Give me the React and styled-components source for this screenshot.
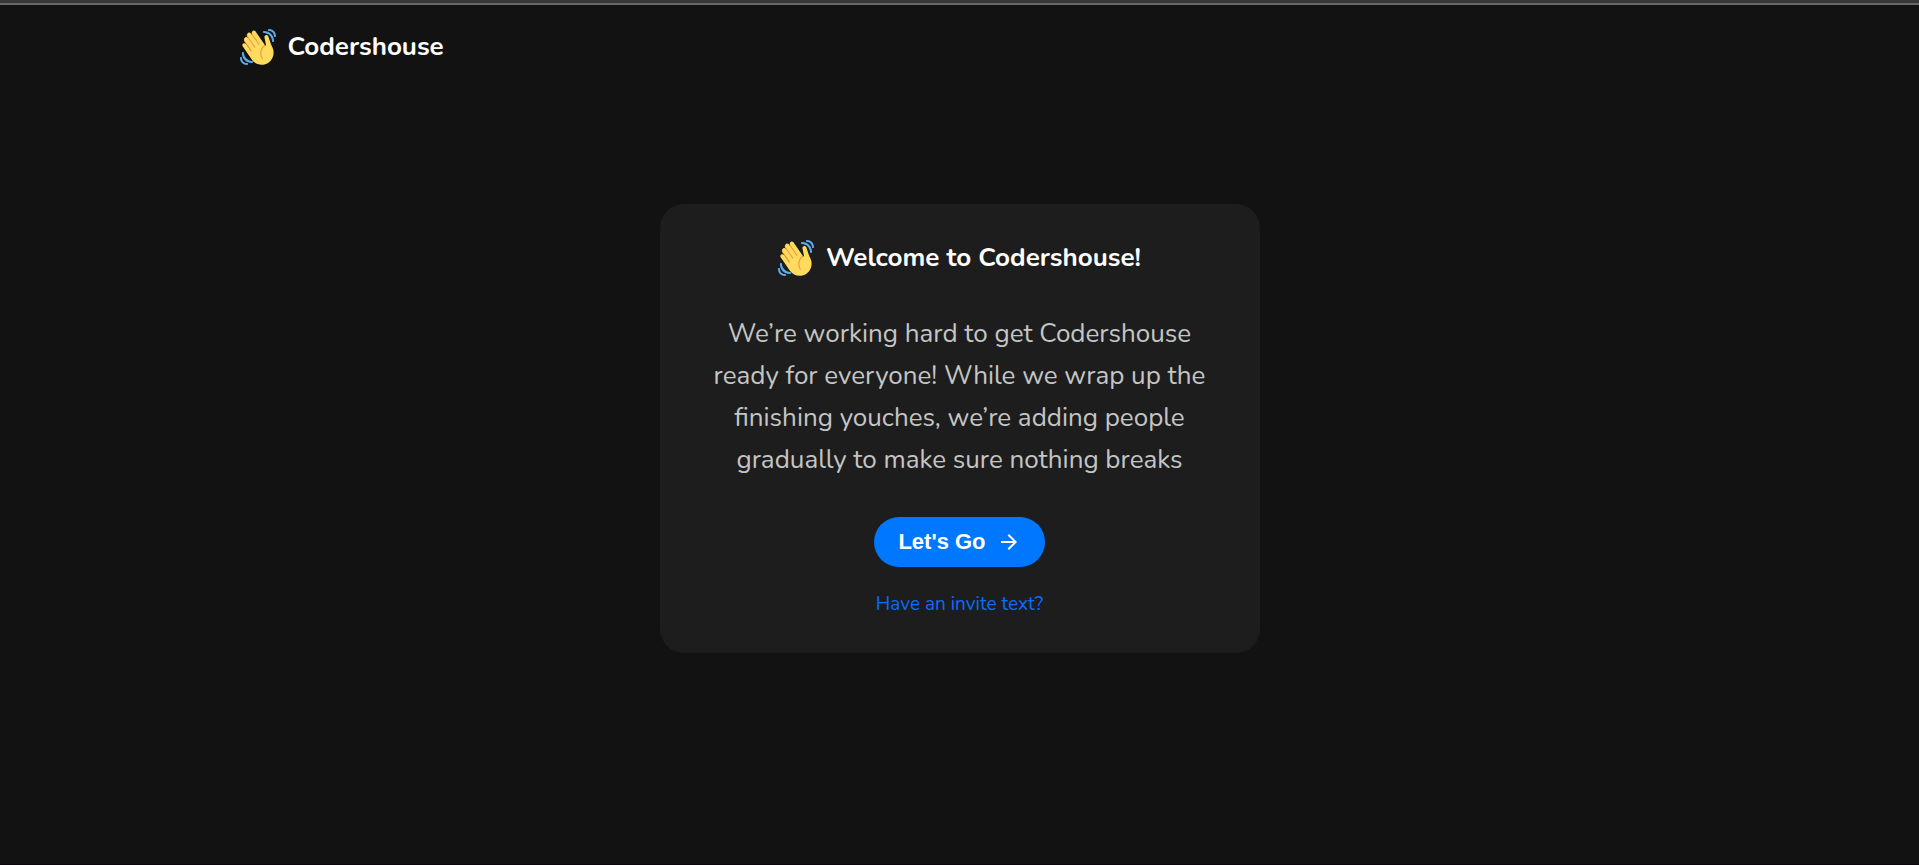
import React from 'react';
import styled, { createGlobalStyle } from 'styled-components';

const GlobalStyle = createGlobalStyle`
  *, *::before, *::after { box-sizing: border-box; }
  body {
    margin: 0;
    background: #121212;
    color: #ffffff;
    font-family: "Nunito", "Lato", sans-serif;
  }
`;

const Page = styled.div`
  min-height: 100vh;
  display: flex;
  flex-direction: column;
  border-bottom: 1px solid #0b060b;
`;

const TopStrip = styled.div`
  height: 5px;
  background: #373737;
  border-bottom: 2px solid #666666;
`;

const Header = styled.header`
  width: 100%;
  max-width: 1440px;
  margin: 0 auto;
  padding: 24px 0;
  display: flex;
`;

const Brand = styled.a`
  display: flex;
  align-items: center;
  gap: 12px;
  color: #ffffff;
  font-size: 26px;
  font-weight: 700;
  line-height: 36px;
  text-decoration: none;
`;

const Main = styled.main`
  display: flex;
  justify-content: center;
  padding: 115px 16px 32px;
`;

const Card = styled.section`
  width: 100%;
  max-width: 600px;
  padding: 36px 40px;
  display: flex;
  flex-direction: column;
  align-items: center;
  background: #1d1d1d;
  border-radius: 24px;
  text-align: center;
`;

const Heading = styled.h1`
  margin: 0;
  display: flex;
  align-items: center;
  gap: 12px;
  font-size: 26px;
  font-weight: 700;
  line-height: 36px;
`;

const Message = styled.p`
  margin: 37px 0 36px;
  color: #c4c5c5;
  font-size: 26px;
  line-height: 42px;
`;

const GoButton = styled.button`
  height: 50px;
  padding: 0 24px;
  display: flex;
  align-items: center;
  gap: 11px;
  border: 0;
  border-radius: 25px;
  background: #0077ff;
  color: #ffffff;
  font: 700 22px "Liberation Sans", Arial, sans-serif;
  cursor: pointer;
`;

const InviteLink = styled.a`
  margin-top: 24px;
  color: #0b6bff;
  font-size: 19px;
  line-height: 26px;
  text-decoration: none;
`;

const HandSvg = styled.svg`
  width: 36px;
  height: 36px;
  flex: none;
`;

function WavingHand() {
  return (
    <HandSvg viewBox="0 0 36 36" aria-hidden="true">
      <path fill="#EF9645" d="M4.861 9.147c.94-.657 2.357-.531 3.201.166l-.968-1.407c-.779-1.111-.5-2.313.612-3.093 1.112-.777 4.263 1.312 4.263 1.312-.786-1.122-.639-2.544.483-3.331 1.122-.784 2.67-.513 3.456.611l10.292 14.72L25 31l-11.083-4.042L4.25 12.443c-.793-1.129-.519-2.686.611-3.296z" />
      <path fill="#FFDC5D" d="M2.695 17.336s-1.132-1.65.519-2.781c1.649-1.131 2.78.518 2.78.518l5.251 7.658c.181-.302.379-.6.6-.894L4.557 11.21s-1.131-1.649.519-2.78c1.649-1.131 2.78.518 2.78.518l6.855 9.997c.255-.208.516-.417.785-.622L7.549 6.732s-1.131-1.649.519-2.78c1.649-1.131 2.78.518 2.78.518l7.947 11.589c.292-.179.581-.334.871-.498L12.238 4.729s-1.131-1.649.518-2.78c1.649-1.131 2.78.518 2.78.518l7.854 11.454 1.194 1.742c-4.948 3.394-5.419 9.779-2.592 13.902.565.825 1.39.26 1.39.26-3.393-4.949-2.357-10.51 2.592-13.903L24.515 8.62s-.545-1.924 1.378-2.47c1.924-.545 2.47 1.379 2.47 1.379l1.685 5.004c.668 1.984 1.379 3.961 2.32 5.831 2.657 5.28 1.07 11.842-3.94 15.279-5.465 3.747-12.936 2.354-16.684-3.11L2.695 17.336z" />
      <path fill="#5DADEC" d="M12 32.042C8 32.042 3.958 28 3.958 24c0-.553-.405-1-.958-1s-1.042.447-1.042 1C1.958 30 6 34.042 12 34.042c.553 0 1-.489 1-1.042s-.447-.958-1-.958z" />
      <path fill="#5DADEC" d="M7 34c-3 0-5-2-5-5 0-.553-.447-1-1-1s-1 .447-1 1c0 4 3 7 7 7 .553 0 1-.447 1-1s-.447-1-1-1zM24 2c-.552 0-1 .448-1 1s.448 1 1 1c4 0 8 3.589 8 8 0 .552.448 1 1 1s1-.448 1-1c0-5.514-4-10-10-10z" />
      <path fill="#5DADEC" d="M29 .042c-.552 0-1 .406-1 .958s.448 1.042 1 1.042c3 0 4.958 2.225 4.958 4.958 0 .552.489 1 1.042 1s.958-.448.958-1C35.958 3.163 33 .042 29 .042z" />
    </HandSvg>
  );
}

function ArrowForward() {
  return (
    <svg width="24" height="24" viewBox="0 0 24 24" fill="#ffffff" aria-hidden="true">
      <path d="M12 4l-1.41 1.41L16.17 11H4v2h12.17l-5.58 5.59L12 20l8-8z" />
    </svg>
  );
}

export default function App() {
  return (
    <>
      <GlobalStyle />
      <Page>
        <TopStrip />
        <Header>
          <Brand href="#home">
            <WavingHand />
            <span>Codershouse</span>
          </Brand>
        </Header>
        <Main>
          <Card>
            <Heading>
              <WavingHand />
              <span>Welcome to Codershouse!</span>
            </Heading>
            <Message>
              We’re working hard to get Codershouse ready for everyone! While we wrap up the
              finishing youches, we’re adding people gradually to make sure nothing breaks
            </Message>
            <GoButton type="button">
              <span>Let's Go</span>
              <ArrowForward />
            </GoButton>
            <InviteLink href="#invite">Have an invite text?</InviteLink>
          </Card>
        </Main>
      </Page>
    </>
  );
}
